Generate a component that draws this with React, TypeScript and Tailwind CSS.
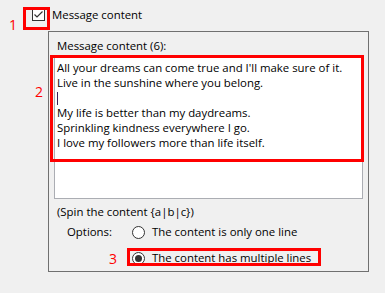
import React from 'react';

const lines = [
  "All your dreams can come true and I'll make sure of it.",
  'Live in the sunshine where you belong.',
  '',
  'My life is better than my daydreams.',
  'Sprinkling kindness everywhere I go.',
  'I love my followers more than life itself.',
];

const Radio = ({ checked }: { checked?: boolean }) => (
  <span className="flex h-[13px] w-[13px] items-center justify-center rounded-full border border-[#333] bg-white">
    {checked && <span className="h-[7px] w-[7px] rounded-full bg-[#333]" />}
  </span>
);

export default function App() {
  return (
    <div className="relative h-[293px] w-[385px] overflow-hidden bg-[#f0f0f0] text-[11.4px] text-black [font-family:'Open_Sans',sans-serif]">
      {/* header checkbox */}
      <div className="flex h-[31px] items-center gap-[7px] pl-[32px] pb-[2px]">
        <span className="flex h-[13px] w-[13px] items-center justify-center border border-[#333] bg-white">
          <svg width="11" height="11" viewBox="0 0 11 11">
            <path d="M1.5 5.5 L4 8 L9.5 2.5" fill="none" stroke="#333" strokeWidth="1.2" />
          </svg>
        </span>
        <span>Message content</span>
      </div>

      {/* group box */}
      <div className="ml-[48px] flex h-[241px] w-[321px] flex-col border border-[#707070] pl-[5px] pr-[5px]">
        <div className="mt-[6px] pl-[3px] leading-[16px]">Message content (6):</div>
        <div className="mt-[2px] h-[143px] border border-[#abadb3] bg-white px-[2px] pt-[3px] leading-[15px]">
          {lines.map((l, i) => (
            <div key={i} className="h-[15px] whitespace-nowrap">
              {l || <span className="inline-block h-[13px] w-px translate-y-[2px] bg-[#3b1f5a]" />}
            </div>
          ))}
        </div>
        <div className="mt-[5px] pl-[3px] leading-[16px]">(Spin the content {'{a|b|c}'})</div>
        <div className="mt-[4px] flex items-center leading-[16px]">
          <span className="w-[78px] pl-[13px]">Options:</span>
          <Radio />
          <span className="ml-[7px]">The content is only one line</span>
        </div>
        <div className="mt-[10px] flex items-center pl-[78px] leading-[16px]">
          <Radio checked />
          <span className="ml-[7px]">The content has multiple lines</span>
        </div>
      </div>

      {/* annotations */}
      <div className="absolute left-[23px] top-[7px] h-[23px] w-[27px] border-[3px] border-[#ff0000]" />
      <span className="absolute left-[9px] top-[17px] text-[14px] leading-[16px] text-[#ff0000]">1</span>
      <div className="absolute left-[50px] top-[55px] h-[107px] w-[314px] border-[3px] border-[#ff0000]" />
      <span className="absolute left-[35px] top-[84px] text-[14px] leading-[16px] text-[#ff0000]">2</span>
      <div className="absolute left-[127px] top-[248px] h-[18px] w-[194px] border-[3px] border-[#ff0000]" />
      <span className="absolute left-[109px] top-[251px] text-[14px] leading-[16px] text-[#ff0000]">3</span>
    </div>
  );
}
